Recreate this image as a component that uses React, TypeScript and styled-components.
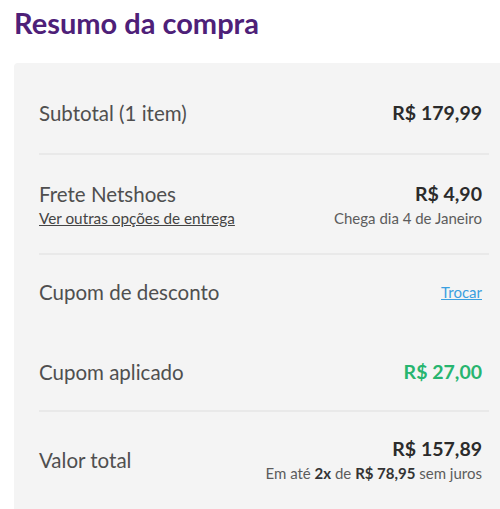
import React from 'react';
import styled, { createGlobalStyle } from 'styled-components';

const GlobalStyle = createGlobalStyle`
	body {
		margin: 0;
		background: #fff;
		font-family: Lato, "Open Sans", sans-serif;
	}
`;

const Page = styled.div`
	padding: 6px 0 0 14px;
	height: 509px;
	box-sizing: border-box;
	overflow: hidden;
`;

const Title = styled.h1`
	margin: 0 0 23px 0;
	font-size: 29px;
	line-height: 34px;
	font-weight: 700;
	color: #4e2078;
`;

const Card = styled.div`
	background: #f4f4f4;
	border-radius: 4px 0 0 0;
	padding: 10px 11px 0 25px;
	min-height: 460px;
`;

const Row = styled.div<{ divider?: boolean; top?: number; bottom?: number }>`
	display: flex;
	justify-content: space-between;
	align-items: center;
	padding: ${p => p.top ?? 28}px 7px ${p => p.bottom ?? 28}px 0;
	border-bottom: ${p => (p.divider ? '2px solid #e9e9e9' : 'none')};
`;

const Col = styled.div<{ right?: boolean }>`
	display: flex;
	flex-direction: column;
	align-items: ${p => (p.right ? 'flex-end' : 'flex-start')};
`;

const Label = styled.span`
	font-size: 20.5px;
	line-height: 26px;
	color: #4f4f4f;
`;

const Value = styled.span<{ green?: boolean }>`
	font-size: 19.5px;
	line-height: 26px;
	font-weight: 700;
	color: ${p => (p.green ? '#27b56f' : '#2b2b2b')};
`;

const SubLink = styled.a`
	font-size: 15.3px;
	line-height: 22px;
	color: #444;
	text-decoration: underline;
`;

const Note = styled.span`
	font-size: 15px;
	line-height: 22px;
	color: #5c5c5c;
	b {
		color: #333;
	}
`;

const Swap = styled.a`
	font-size: 15px;
	line-height: 22px;
	color: #3a9fe0;
	text-decoration: underline;
`;

export default function App() {
	return (
		<Page>
			<GlobalStyle />
			<Title>Resumo da compra</Title>
			<Card>
				<Row divider top={27} bottom={27}>
					<Label>Subtotal (1 item)</Label>
					<Value>R$ 179,99</Value>
				</Row>
				<Row divider top={26} bottom={24}>
					<Col>
						<Label>Frete Netshoes</Label>
						<SubLink>Ver outras opções de entrega</SubLink>
					</Col>
					<Col right>
						<Value>R$ 4,90</Value>
						<Note>Chega dia 4 de Janeiro</Note>
					</Col>
				</Row>
				<Row top={24} bottom={27}>
					<Label>Cupom de desconto</Label>
					<Swap>Trocar</Swap>
				</Row>
				<Row divider top={27} bottom={25}>
					<Label>Cupom aplicado</Label>
					<Value green>R$ 27,00</Value>
				</Row>
				<Row top={24} bottom={24}>
					<Label>Valor total</Label>
					<Col right>
						<Value>R$ 157,89</Value>
						<Note>Em até <b>2x</b> de <b>R$ 78,95</b> sem juros</Note>
					</Col>
				</Row>
			</Card>
		</Page>
	);
}
